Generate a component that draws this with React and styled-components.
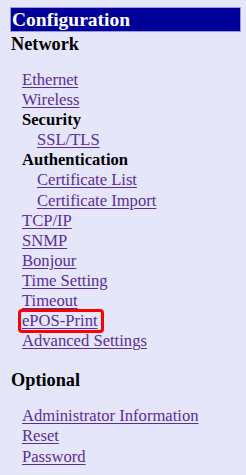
import React from "react";
import styled, { createGlobalStyle } from "styled-components";

const GlobalStyle = createGlobalStyle`
  html, body {
    margin: 0;
    padding: 0;
    background: #e6e6fa;
  }
  body {
    font-family: "Liberation Serif", "Times New Roman", serif;
  }
`;

const Menu = styled.div`
  display: flex;
  flex-direction: column;
  padding: 8px 6px 10px 11px;
  color: #000;
`;

const TitleBar = styled.div`
  background: #000099;
  color: #fff;
  font-weight: bold;
  font-size: 19.5px;
  line-height: 23px;
  padding: 0 2px 0 1px;
  box-shadow: 0 0 0 1px #9a9ad8;
`;

const Section = styled.div`
  font-weight: bold;
  font-size: 18.3px;
  line-height: 22px;
  margin-top: ${(p) => p.$top}px;
`;

const List = styled.ul`
  list-style: none;
  margin: ${(p) => p.$top}px 0 0 0;
  padding: 0 0 0 11px;
  display: flex;
  flex-direction: column;
`;

const Item = styled.li`
  font-size: 16.6px;
  line-height: 20.1px;
  padding-left: ${(p) => (p.$sub ? 15 : 0)}px;
  font-weight: ${(p) => (p.$label ? "bold" : "normal")};
  display: flex;
`;

const Link = styled.a`
  color: #5a2e96;
  text-decoration: underline;
  text-underline-offset: 2px;
  outline: ${(p) => (p.$marked ? "3px solid #ff0000" : "none")};
  outline-offset: -1px;
  border-radius: 2px;
  padding: ${(p) => (p.$marked ? "0 4px 0 2px" : "0")};
  margin-left: ${(p) => (p.$marked ? -2 : 0)}px;
`;

const network = [
  { text: "Ethernet" },
  { text: "Wireless" },
  { text: "Security", label: true },
  { text: "SSL/TLS", sub: true },
  { text: "Authentication", label: true },
  { text: "Certificate List", sub: true },
  { text: "Certificate Import", sub: true },
  { text: "TCP/IP" },
  { text: "SNMP" },
  { text: "Bonjour" },
  { text: "Time Setting" },
  { text: "Timeout" },
  { text: "ePOS-Print", marked: true },
  { text: "Advanced Settings" },
];

const optional = [
  { text: "Administrator Information" },
  { text: "Reset" },
  { text: "Password" },
];

function Entries({ items }) {
  return items.map((it) => (
    <Item key={it.text} $sub={it.sub} $label={it.label}>
      {it.label ? (
        it.text
      ) : (
        <Link href="#" $marked={it.marked}>
          {it.text}
        </Link>
      )}
    </Item>
  ));
}

export default function App() {
  return (
    <>
      <GlobalStyle />
      <Menu>
        <TitleBar>Configuration</TitleBar>
        <Section $top={2}>Network</Section>
        <List $top={15}>
          <Entries items={network} />
        </List>
        <Section $top={18}>Optional</Section>
        <List $top={15}>
          <Entries items={optional} />
        </List>
      </Menu>
    </>
  );
}
